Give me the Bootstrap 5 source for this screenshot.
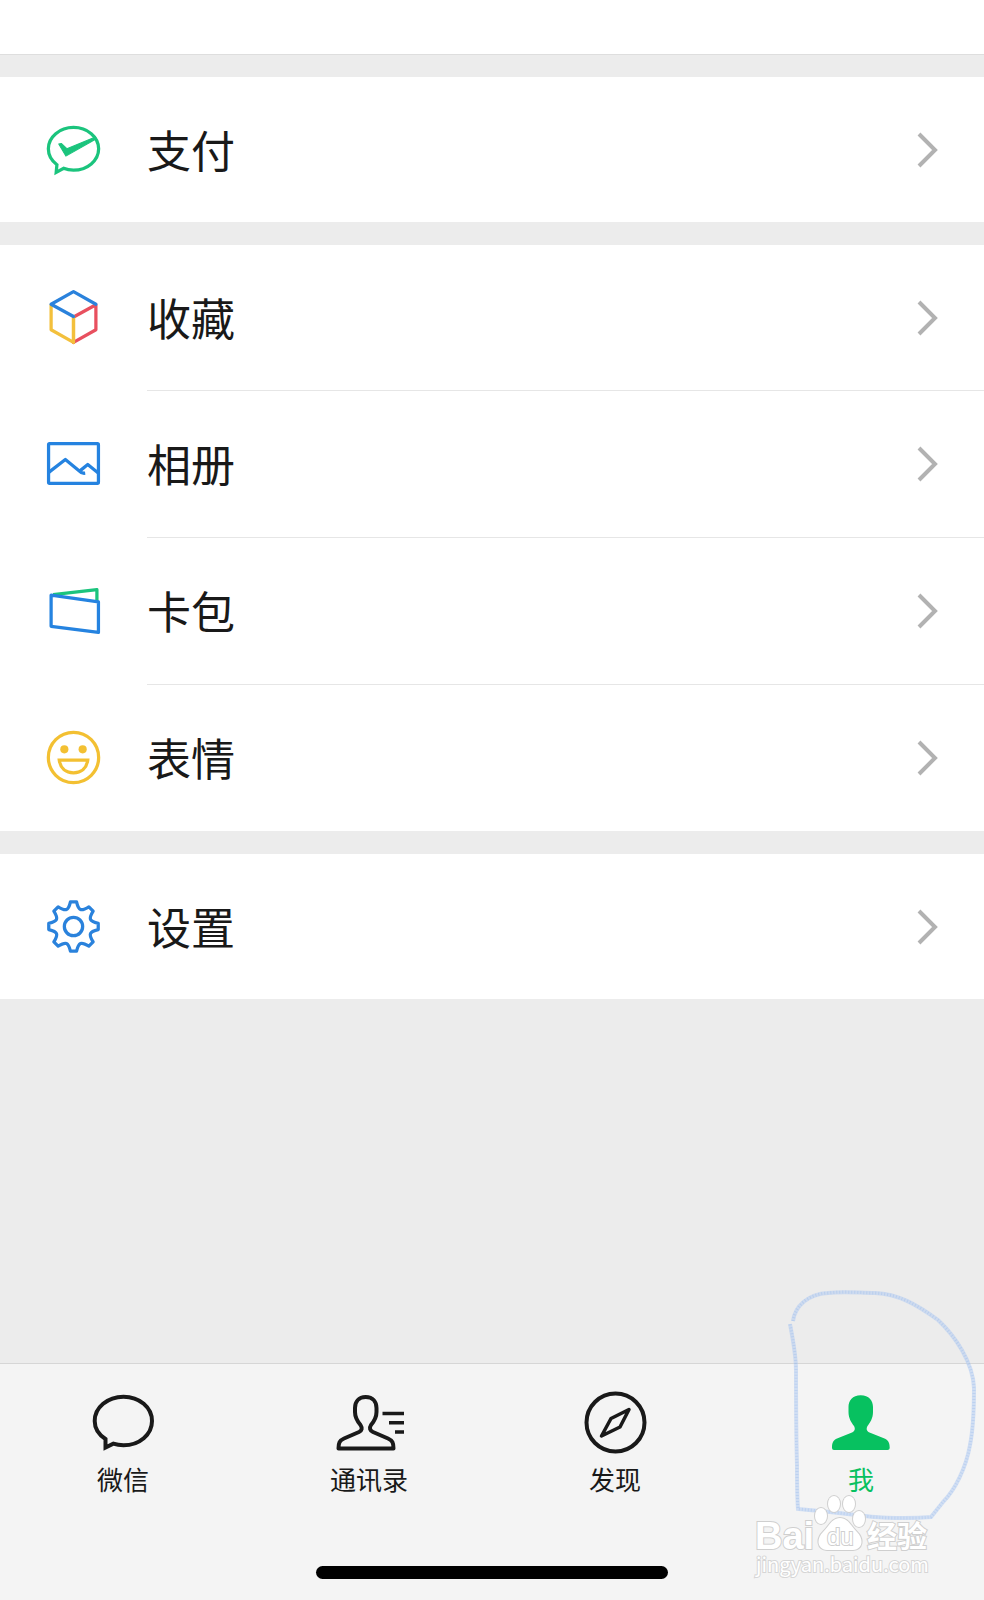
<!DOCTYPE html>
<html lang="zh-CN">
<head>
<meta charset="utf-8">
<meta name="viewport" content="width=device-width, initial-scale=1">
<title>我</title>
<link href="https://cdn.jsdelivr.net/npm/bootstrap@5.3.0/dist/css/bootstrap.min.css" rel="stylesheet">
<style>
  body { background: #ececec; color: #191919; font-family: "Noto Sans CJK SC", sans-serif; }
  .profile-end { height: 55px; border-bottom: 1px solid #dedede; }
  .menu-stack { gap: 23px; padding: 22px 0 24px; }
  .menu-entry { padding-left: 45px; color: inherit; text-decoration: none; }
  .menu-entry:hover { color: inherit; background: #f7f7f7; }
  .menu-icon { width: 57px; height: 57px; margin-right: 45px; fill: none; stroke-width: 3.2; stroke-linejoin: round; }
  .menu-body { height: 145px; padding-right: 46px; font-size: 44px; line-height: 64px; }
  .menu-label { padding-bottom: 2px; }
  .menu-entry + .menu-entry .menu-body { height: 147px; border-top: 1px solid #e6e6e6; }
  .chevron { width: 22px; height: 36px; fill: none; stroke: #b2b2b2; stroke-width: 4; }
  .tab-bar { background: #f4f4f4; border-top: 1px solid #d6d6d6; padding: 27px 0 21px; }
  .tab-entry { color: inherit; text-decoration: none; font-size: 26px; line-height: 36px; gap: 6px; }
  .tab-entry.active { color: #07c160; }
  .tab-icon { width: 72px; height: 64px; fill: none; stroke: #191919; stroke-width: 4; stroke-linejoin: round; }
  .home-bar { width: 36%; max-width: 352px; height: 13px; margin-top: 69px; }
  .annotation { right: 0; bottom: 0; width: 244px; height: 330px; pointer-events: none; }
  .stamp { fill: #fff; stroke: #cfcfcf; stroke-width: 2; paint-order: stroke; }
  .stamp-latin { font-family: "Liberation Sans", sans-serif; font-weight: 700; font-size: 38px; }
  .stamp-du { font-family: "Liberation Sans", sans-serif; font-size: 24px; }
  .stamp-cjk { font-family: "Noto Sans CJK SC", sans-serif; font-weight: 700; font-size: 30px; }
  .stamp-url { font-family: "Noto Sans CJK SC", sans-serif; font-size: 20px; stroke: #d6d6d6; }
</style>
</head>
<body>
<div class="d-flex flex-column min-vh-100">
  <div class="profile-end bg-white"></div>

  <main class="menu-stack d-flex flex-column flex-grow-1">
    <nav class="bg-white">
      <a href="#" class="menu-entry d-flex align-items-center">
        <svg class="menu-icon flex-shrink-0" viewBox="-28 -28 56 56" stroke="#1bc47d" aria-hidden="true">
          <path d="M-16.300 15C-21.600 11-24.700 5.500-24.700-.7C-24.700-12.300-13.600-21.700 0-21.700S24.700-12.300 24.700-.7S13.600 20.300 0 20.300C-3.500 20.300-6.800 19.700-9.700 18.500L-17 22.500Z" stroke-linejoin="miter"/>
          <path d="M-14.500-5.500L-12-6L-6.500-.8L21.500-12.300L22.500-10.500L-7.500 6.500Z" fill="#1bc47d" stroke-width="1"/>
        </svg>
        <span class="menu-body d-flex flex-grow-1 align-items-center justify-content-between"><span class="menu-label">支付</span>
          <svg class="chevron" viewBox="0 0 22 36"><path d="M3 2L19 18L3 34"/></svg></span>
      </a>
    </nav>

    <nav class="bg-white">
      <a href="#" class="menu-entry d-flex align-items-center">
        <svg class="menu-icon flex-shrink-0" viewBox="-28 -28 56 56" stroke-linecap="round" aria-hidden="true">
          <path d="M-22-12.500V12L0 24.500V0" stroke="#f3c03c"/>
          <path d="M0 24.500L22 12V-12.500L1-1" stroke="#e8505f"/>
          <path d="M0-1V24.500" stroke="#f3c03c"/>
          <path d="M0-1L-22-13L0-25.500L22-13" stroke="#2a82dc"/>
        </svg>
        <span class="menu-body d-flex flex-grow-1 align-items-center justify-content-between"><span class="menu-label">收藏</span>
          <svg class="chevron" viewBox="0 0 22 36"><path d="M3 2L19 18L3 34"/></svg></span>
      </a>
      <a href="#" class="menu-entry d-flex align-items-center">
        <svg class="menu-icon flex-shrink-0" viewBox="-28 -28 56 56" stroke="#2583e0" aria-hidden="true">
          <rect x="-24.500" y="-19.500" width="49" height="39" rx="1"/>
          <path d="M-24 8.500L-8-4L6 7.500Q8 10 11.500 9.500M6 7.500L14 1L24 9"/>
        </svg>
        <span class="menu-body d-flex flex-grow-1 align-items-center justify-content-between"><span class="menu-label">相册</span>
          <svg class="chevron" viewBox="0 0 22 36"><path d="M3 2L19 18L3 34"/></svg></span>
      </a>
      <a href="#" class="menu-entry d-flex align-items-center">
        <svg class="menu-icon flex-shrink-0" viewBox="-28 -28 56 56" aria-hidden="true">
          <path d="M-20-15.500L23-20.500V-9" stroke="#1bc47d"/>
          <path d="M-22-15L24.500-8.500V21.500L-22 15.500Z" stroke="#2583e0"/>
        </svg>
        <span class="menu-body d-flex flex-grow-1 align-items-center justify-content-between"><span class="menu-label">卡包</span>
          <svg class="chevron" viewBox="0 0 22 36"><path d="M3 2L19 18L3 34"/></svg></span>
      </a>
      <a href="#" class="menu-entry d-flex align-items-center">
        <svg class="menu-icon flex-shrink-0" viewBox="-28 -28 56 56" stroke="#f3c032" aria-hidden="true">
          <circle r="24.700"/>
          <circle cx="-9" cy="-8" r="4" fill="#f3c032" stroke="none"/>
          <circle cx="9" cy="-8" r="4" fill="#f3c032" stroke="none"/>
          <path d="M-14 2.500H14C13 10.500 7.500 15 0 15S-13 10.500-14 2.500Z" stroke-linejoin="miter"/>
        </svg>
        <span class="menu-body d-flex flex-grow-1 align-items-center justify-content-between"><span class="menu-label">表情</span>
          <svg class="chevron" viewBox="0 0 22 36"><path d="M3 2L19 18L3 34"/></svg></span>
      </a>
    </nav>

    <nav class="bg-white">
      <a href="#" class="menu-entry d-flex align-items-center">
        <svg class="menu-icon flex-shrink-0" viewBox="-28 -28 56 56" stroke="#2a82dc" aria-hidden="true">
          <path d="M-3-24.300H3C5-15.500 7.400-14.500 15.100-19.300L19.300-15.100C14.500-7.400 15.500-5 24.300-3V3C15.500 5 14.500 7.400 19.300 15.100L15.100 19.300C7.400 14.500 5 15.500 3 24.300H-3C-5 15.500-7.400 14.500-15.100 19.300L-19.300 15.100C-14.500 7.400-15.500 5-24.300 3V-3C-15.500-5-14.500-7.400-19.300-15.100L-15.100-19.300C-7.400-14.500-5-15.500-3-24.300Z"/>
          <circle r="9"/>
        </svg>
        <span class="menu-body d-flex flex-grow-1 align-items-center justify-content-between"><span class="menu-label">设置</span>
          <svg class="chevron" viewBox="0 0 22 36"><path d="M3 2L19 18L3 34"/></svg></span>
      </a>
    </nav>
  </main>

  <footer class="tab-bar position-relative">
    <nav class="row g-0">
      <a href="#" class="tab-entry col d-flex flex-column align-items-center">
        <svg class="tab-icon" viewBox="-36 -32 72 64" aria-hidden="true">
          <path d="M-17.500 16C-24.500 11.500-28.300 5-28.300-2C-28.300-15.500-15.500-26.300.5-26.300S29-15.500 29-2S16.500 22.300.5 22.300C-3 22.300-6.500 21.800-9.700 20.700L-17.500 24.500Z" stroke-linejoin="miter"/>
        </svg>
        <span>微信</span>
      </a>
      <a href="#" class="tab-entry col d-flex flex-column align-items-center">
        <svg class="tab-icon" viewBox="-36 -32 72 64" aria-hidden="true">
          <path d="M-3.300-26C-10.500-26-14-21-14-15V-11C-14-5-11-1-8.500 2C-6.500 5-7 7.500-10 9L-25 15.500C-29.500 17.500-30.500 20-30.500 25.500H24.500C24.500 20 23.500 17.500 19 15.500L4 9C1 7.500 0 5 2 2C4.500-1 7.500-5 7.500-11V-15C7.500-21 4-26-3.300-26Z"/>
          <path d="M13.500-9.500H35M20-.3H35M26 9H35" stroke-width="3.500"/>
        </svg>
        <span>通讯录</span>
      </a>
      <a href="#" class="tab-entry col d-flex flex-column align-items-center">
        <svg class="tab-icon" viewBox="-36 -32 72 64" aria-hidden="true">
          <circle cx=".5" cy="-.5" r="29"/>
          <path d="M14-13.500L-4-4.500L-13.500 13L5 4Z" stroke-width="3.500"/>
        </svg>
        <span>发现</span>
      </a>
      <a href="#" class="tab-entry active col d-flex flex-column align-items-center" aria-current="page">
        <svg class="tab-icon" viewBox="-36 -32 72 64" aria-hidden="true">
          <path d="M-.3-27.700C-8.500-27.700-12.500-22-12.500-16V-11C-12.500-4.500-9.500-.5-7 3C-5.500 6-6 8-9 9.500L-24 15.500C-28.500 17.500-29 21-29 25Q-29 27-27 27H26.500Q28.700 27 28.700 25C28.700 21 28 17.500 23.500 15.500L8.500 9.500C5.500 8 5 6 6.500 3C9-.5 12-4.500 12-11V-16C12-22 8-27.700-.3-27.700Z" fill="#07c160" stroke="none"/>
        </svg>
        <span>我</span>
      </a>
    </nav>
    <div class="home-bar bg-black rounded-pill mx-auto"></div>

    <svg class="annotation position-absolute" viewBox="0 0 244 330">
      <g fill="none" stroke="#b4cdf3" stroke-width="4" opacity=".55">
        <path id="loop" d="M53 51C55 36 68 24 88 23C105 21 120 23 135 23C158 24 176 34 198 50C215 66 233 92 234 118C234 140 233 160 230 175C226 198 215 220 203 232L191 247C170 249 140 248 125 246L90 242L58 239C57 225 57 210 57 195C56 160 56 125 56 100C56 85 53 70 50 54"/>
        <use href="#loop" stroke="#8fb5ee" stroke-width="3" stroke-dasharray="1 2"/>
      </g>
      <g class="stamp">
        <ellipse cx="81" cy="246" rx="6" ry="8"/>
        <ellipse cx="94" cy="234" rx="6" ry="8"/>
        <ellipse cx="109" cy="234" rx="6" ry="8"/>
        <ellipse cx="119" cy="249" rx="6" ry="8"/>
        <path d="M100 248C92 248 89 256 83 262C76 269 77 279 87 280H113C123 279 124 269 117 262C111 256 108 248 100 248Z"/>
        <text class="stamp-latin" x="15" y="279">Bai</text>
        <text class="stamp-du" x="87" y="275">du</text>
        <text class="stamp-cjk" x="127" y="277">经验</text>
        <text class="stamp-url" x="16" y="302">jingyan.baidu.com</text>
      </g>
    </svg>
  </footer>
</div>
<script src="https://cdn.jsdelivr.net/npm/bootstrap@5.3.0/dist/js/bootstrap.bundle.min.js"></script>
</body>
</html>
